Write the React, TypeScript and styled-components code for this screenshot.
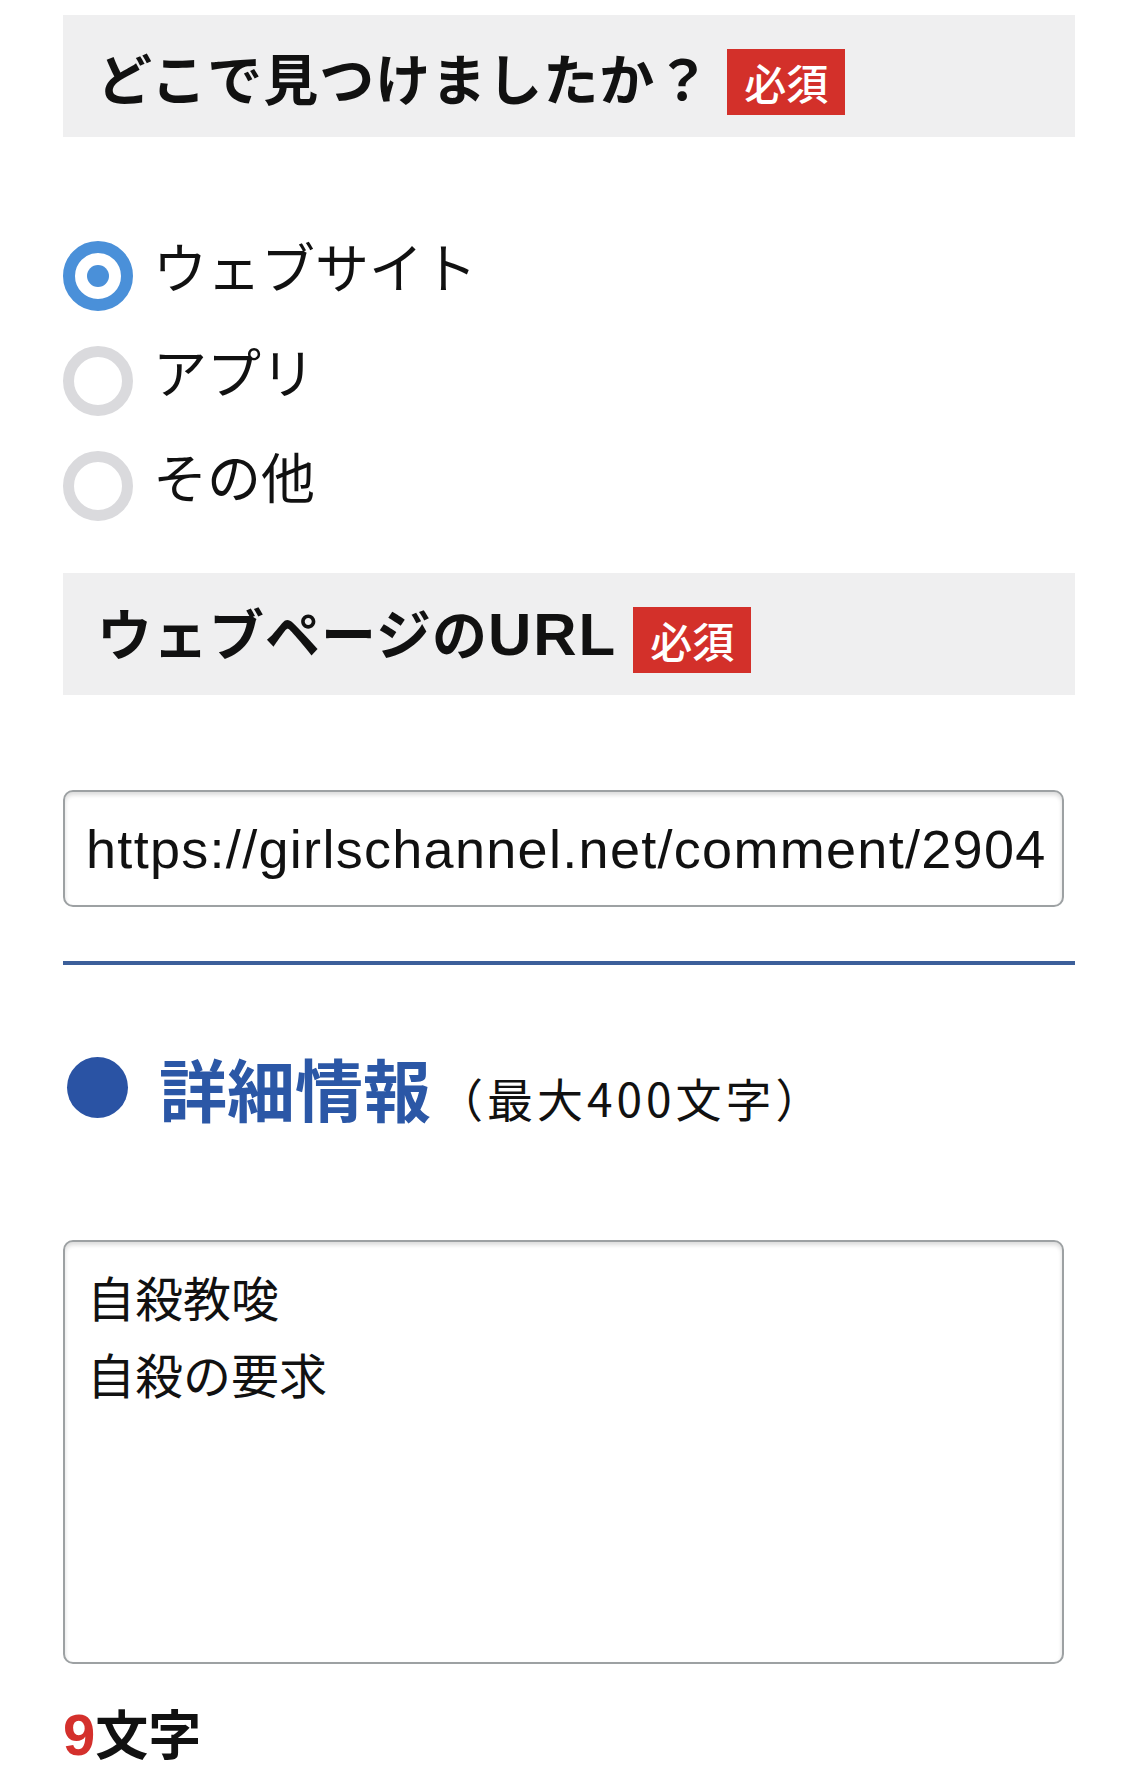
import React from "react";
import styled, { createGlobalStyle } from "styled-components";

const GlobalStyle = createGlobalStyle`
  html, body {
    margin: 0;
    padding: 0;
    background: #ffffff;
  }
  body {
    font-family: "Noto Sans CJK JP", "Noto Sans", sans-serif;
    color: #111;
  }
  * { box-sizing: border-box; }
`;

const Page = styled.div`
  width: 1125px;
  padding-left: 63px;
  display: flex;
  flex-direction: column;
`;

const Column = styled.div`
  width: 1012px;
  display: flex;
  flex-direction: column;
`;

const SectionBar = styled.div<{ $mt: number }>`
  margin-top: ${(p) => p.$mt}px;
  height: 122px;
  background: #efeff0;
  display: flex;
  align-items: center;
  padding-left: 34px;
`;

const BarTitle = styled.h2`
  margin: 0;
  font-family: "Noto Sans CJK JP", sans-serif;
  font-size: 55px;
  font-weight: 700;
  color: #111;
  line-height: 1;
  letter-spacing: 1px;
`;

const Latin = styled.span`
  font-family: "Liberation Sans", Arial, sans-serif;
  font-size: 60px;
  font-weight: 700;
  letter-spacing: 2px;
`;

const Badge = styled.span<{ $ml: number }>`
  margin-left: ${(p) => p.$ml}px;
  margin-top: 12px;
  height: 66px;
  padding: 0 17px;
  background: #d3302a;
  color: #fff;
  font-family: "Noto Sans CJK JP", sans-serif;
  font-size: 42px;
  font-weight: 500;
  display: flex;
  align-items: center;
  line-height: 1;
`;

const RadioList = styled.div`
  margin-top: 104px;
  display: flex;
  flex-direction: column;
  gap: 35px;
`;

const RadioRow = styled.label`
  display: flex;
  align-items: flex-start;
  height: 70px;
`;

const RadioCircle = styled.span<{ $checked?: boolean }>`
  position: relative;
  width: 70px;
  height: 70px;
  flex: none;
  border-radius: 50%;
  border: ${(p) => (p.$checked ? "12px solid #4a90d9" : "11px solid #dadadd")};
  background: #fff;
  &::after {
    content: "";
    display: ${(p) => (p.$checked ? "block" : "none")};
    position: absolute;
    width: 22px;
    height: 22px;
    border-radius: 50%;
    background: #4a90d9;
    left: 50%;
    top: 50%;
    transform: translate(-50%, -50%);
  }
`;

const RadioText = styled.span`
  margin-left: 20px;
  margin-top: -10px;
  font-family: "Noto Sans CJK JP", sans-serif;
  font-size: 54px;
  font-weight: 400;
  line-height: 70px;
  color: #111;
`;

const UrlInput = styled.input`
  margin-top: 95px;
  width: 1001px;
  height: 117px;
  border: 2px solid #9da1a3;
  border-radius: 10px;
  box-shadow: inset 0 3px 4px rgba(0, 0, 0, 0.14);
  padding: 0 0 0 21px;
  font-family: "Liberation Sans", Arial, sans-serif;
  font-size: 54px;
  letter-spacing: 1.3px;
  color: #111;
  background: #fff;
  outline: none;
  -webkit-appearance: none;
`;

const Divider = styled.hr`
  margin: 54px 0 0 0;
  border: none;
  height: 4px;
  background: #3c5f9a;
  width: 1012px;
`;

const SectionHeading = styled.div`
  margin-top: 74px;
  height: 96px;
  display: flex;
  align-items: center;
`;

const Dot = styled.span`
  width: 61px;
  height: 61px;
  margin-left: 4px;
  border-radius: 50%;
  background: #2a53a4;
  flex: none;
`;

const TitleGroup = styled.div`
  display: flex;
  align-items: baseline;
  margin-left: 31px;
`;

const Title = styled.span`
  font-family: "Noto Sans CJK JP", sans-serif;
  font-size: 68px;
  font-weight: 700;
  color: #2b57a6;
`;

const SubTitle = styled.span`
  margin-left: 6px;
  font-family: "Noto Sans CJK JP", sans-serif;
  font-size: 46px;
  font-weight: 400;
  letter-spacing: 4px;
  color: #111;
`;

const Details = styled.textarea`
  margin-top: 105px;
  width: 1001px;
  height: 424px;
  border: 2px solid #9da1a3;
  border-radius: 10px;
  box-shadow: inset 0 3px 4px rgba(0, 0, 0, 0.14);
  padding: 16px 22px;
  font-family: "Noto Sans CJK JP", sans-serif;
  font-size: 48px;
  line-height: 77px;
  color: #111;
  background: #fff;
  resize: none;
  outline: none;
  overflow: hidden;
`;

const Counter = styled.div`
  margin-top: 36px;
  font-family: "Noto Sans CJK JP", sans-serif;
  font-size: 53px;
  font-weight: 700;
  color: #111;
  line-height: 64px;
`;

const Count = styled.span`
  font-family: "Liberation Sans", Arial, sans-serif;
  font-size: 58px;
  font-weight: 700;
  color: #d4302c;
`;

export default function App() {
  const options = [
    { label: "ウェブサイト", checked: true },
    { label: "アプリ", checked: false },
    { label: "その他", checked: false },
  ];
  return (
    <>
      <GlobalStyle />
      <Page>
        <Column>
          <SectionBar $mt={15}>
            <BarTitle>どこで見つけましたか？</BarTitle>
            <Badge $ml={16}>必須</Badge>
          </SectionBar>

          <RadioList>
            {options.map((o) => (
              <RadioRow key={o.label}>
                <RadioCircle $checked={o.checked} />
                <RadioText>{o.label}</RadioText>
              </RadioRow>
            ))}
          </RadioList>

          <SectionBar $mt={52}>
            <BarTitle>
              ウェブページの<Latin>URL</Latin>
            </BarTitle>
            <Badge $ml={16}>必須</Badge>
          </SectionBar>

          <UrlInput
            type="text"
            readOnly
            defaultValue="https://girlschannel.net/comment/2904"
          />

          <Divider />

          <SectionHeading>
            <Dot />
            <TitleGroup>
              <Title>詳細情報</Title>
              <SubTitle>（最大400文字）</SubTitle>
            </TitleGroup>
          </SectionHeading>

          <Details readOnly defaultValue={"自殺教唆\n自殺の要求"} />

          <Counter>
            <Count>9</Count>文字
          </Counter>
        </Column>
      </Page>
    </>
  );
}
